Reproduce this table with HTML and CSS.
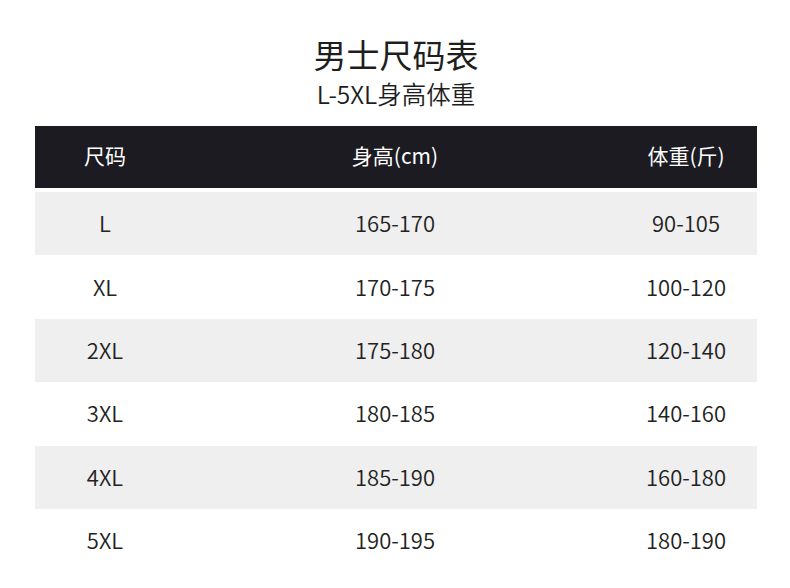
FILE: index.html
```html
<!DOCTYPE html>
<html lang="zh-CN">
<head>
<meta charset="utf-8">
<title>男士尺码表</title>
<link rel="stylesheet" href="styles.css">
</head>
<body>
<div class="page">
  <h1 class="title">男士尺码表</h1>
  <p class="subtitle">L-5XL身高体重</p>
  <div class="table">
    <div class="row head"><div>尺码</div><div>身高(cm)</div><div>体重(斤)</div></div>
    <div class="row alt"><div>L</div><div>165-170</div><div>90-105</div></div>
    <div class="row"><div>XL</div><div>170-175</div><div>100-120</div></div>
    <div class="row alt"><div>2XL</div><div>175-180</div><div>120-140</div></div>
    <div class="row"><div>3XL</div><div>180-185</div><div>140-160</div></div>
    <div class="row alt"><div>4XL</div><div>185-190</div><div>160-180</div></div>
    <div class="row"><div>5XL</div><div>190-195</div><div>180-190</div></div>
  </div>
</div>
</body>
</html>
```
FILE: styles.css
```css
* { box-sizing: border-box; }
html, body { margin: 0; padding: 0; background: #fff; }
body {
  font-family: "Noto Sans CJK SC", "Noto Sans", sans-serif;
  color: #222;
}
.page {
  width: 790px;
  height: 588px;
  padding: 37px 33px 0 35px;
  display: flex;
  flex-direction: column;
  align-items: center;
}
.title {
  margin: 0;
  font-size: 33px;
  font-weight: 400;
  line-height: 34px;
  color: #1e1e1e;
}
.subtitle {
  margin: 8px 0 0;
  font-size: 24.5px;
  font-weight: 350;
  line-height: 30px;
  color: #1e1e1e;
}
.table {
  margin-top: 17px;
  width: 722px;
  display: flex;
  flex-direction: column;
}
.row {
  display: grid;
  grid-template-columns: 140px 1fr 142px;
  height: 63.4px;
  padding-bottom: 3px;
  align-items: center;
  text-align: center;
  font-size: 22px;
  font-weight: 350;
  color: #222;
}
.row.head {
  height: 62px;
  margin-bottom: 4px;
  padding-bottom: 4px;
  background: #1b1b21;
  color: #fff;
  font-size: 21px;
  font-weight: 400;
}
.row.alt { background: #efefef; }
```
